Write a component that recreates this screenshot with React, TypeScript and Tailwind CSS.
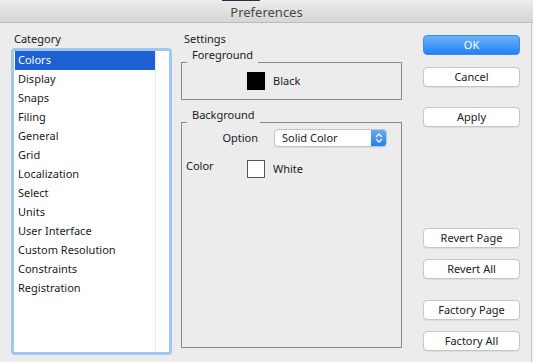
import React from "react";

const categories = [
  "Colors",
  "Display",
  "Snaps",
  "Filing",
  "General",
  "Grid",
  "Localization",
  "Select",
  "Units",
  "User Interface",
  "Custom Resolution",
  "Constraints",
  "Registration",
];

function Btn({ label, primary, className }: { label: string; primary?: boolean; className?: string }) {
  return (
    <div
      className={
        "h-[20px] rounded-[4px] flex items-center justify-center text-[11px] leading-[14px] " +
        (primary
          ? "bg-gradient-to-b from-[#6cb3f8] to-[#1f80f4] border border-[#3b8cf0] text-white"
          : "bg-white border border-[#c6c6c6] text-[#222] shadow-[0_1px_0_rgba(0,0,0,0.06)]") +
        " " +
        (className ?? "")
      }
    >
      {label}
    </div>
  );
}

export default function App() {
  return (
    <div
      className="w-[533px] h-[362px] bg-[#ececec] flex flex-col overflow-hidden relative text-[#1a1a1a]"
      style={{ fontFamily: '"Noto Sans", "Open Sans", sans-serif' }}
    >
      <div className="absolute top-0 left-[222px] w-[38px] h-[1px] bg-[#2a2f3a]" />
      <div className="h-[23px] shrink-0 border-b border-[#bcbcbc] bg-gradient-to-b from-[#ececec] to-[#d5d5d5] flex items-center justify-center pt-[3px] text-[13px] text-[#474747]">
        Preferences
      </div>
      <div className="flex flex-1 mr-[1px] border-r border-[#cacaca]">
        {/* Left column */}
        <div className="ml-[11px] w-[161px] pt-[9px] flex flex-col">
          <div className="text-[11px] leading-[14px] pl-[3px]">Category</div>
          <div className="mt-[2px] h-[307px] border-[3px] border-[#a2c6ef] rounded-[4px] bg-white flex">
            <div className="flex-1 pl-[1px] flex flex-col">
              {categories.map((c, i) => (
                <div
                  key={c}
                  className={
                    "h-[19px] leading-[18px] text-[11px] pl-[3px] " +
                    (i === 0 ? "bg-[#1d61d4] text-white" : "")
                  }
                >
                  {c}
                </div>
              ))}
            </div>
            <div className="w-[14px] border-l border-[#e9e9e9] bg-white" />
          </div>
        </div>

        {/* Middle column */}
        <div className="ml-[9px] w-[221px] pt-[9px] flex flex-col">
          <div className="text-[11px] leading-[14px] pl-[3px]">Settings</div>
          <div className="mt-[16px] h-[38px] relative border border-[#8a8a8a]">
            <div className="absolute left-[5px] top-[-15px] px-[5px] pb-[2px] bg-[#ececec] text-[11px] leading-[14px]">
              Foreground
            </div>
            <div className="flex items-center h-full pl-[65px] pb-[1px]">
              <div className="w-[18px] h-[18px] bg-black" />
              <span className="ml-[8px] text-[11px] leading-[14px]">Black</span>
            </div>
          </div>

          <div className="mt-[22px] h-[226px] relative border border-[#8a8a8a]">
            <div className="absolute left-[5px] top-[-15px] px-[5px] pb-[2px] bg-[#ececec] text-[11px] leading-[14px]">
              Background
            </div>
            <div className="flex items-center pt-[6px]">
              <div className="w-[76px] text-right text-[11px] leading-[14px]">Option</div>
              <div className="ml-[16px] w-[113px] h-[18px] rounded-[4px] bg-white border border-[#c4c4c4] shadow-[0_1px_0_rgba(0,0,0,0.06)] flex overflow-hidden">
                <div className="flex-1 pl-[7px] text-[11px] leading-[16px]">Solid Color</div>
                <div className="w-[15px] bg-gradient-to-b from-[#64aaf7] to-[#1e7ef3] flex items-center justify-center">
                  <svg width="8" height="12" viewBox="0 0 8 12" fill="none" stroke="white" strokeWidth="1.4" strokeLinecap="round" strokeLinejoin="round">
                    <path d="M1.5 4.5 L4 2 L6.5 4.5" />
                    <path d="M1.5 7.5 L4 10 L6.5 7.5" />
                  </svg>
                </div>
              </div>
            </div>
            <div className="flex items-start mt-[13px]">
              <div className="w-[65px] pl-[4px] text-[11px] leading-[14px] -mt-[1px]">Color</div>
              <div className="flex items-center">
                <div className="w-[18px] h-[18px] bg-white border border-[#555]" />
                <span className="ml-[8px] text-[11px] leading-[14px]">White</span>
              </div>
            </div>
          </div>
        </div>

        {/* Right column */}
        <div className="ml-[21px] w-[97px] pt-[12px] flex flex-col">
          <Btn label="OK" primary />
          <Btn label="Cancel" className="mt-[12px]" />
          <Btn label="Apply" className="mt-[20px]" />
          <Btn label="Revert Page" className="mt-[101px]" />
          <Btn label="Revert All" className="mt-[11px]" />
          <Btn label="Factory Page" className="mt-[21px]" />
          <Btn label="Factory All" className="mt-[11px]" />
        </div>
      </div>
    </div>
  );
}
